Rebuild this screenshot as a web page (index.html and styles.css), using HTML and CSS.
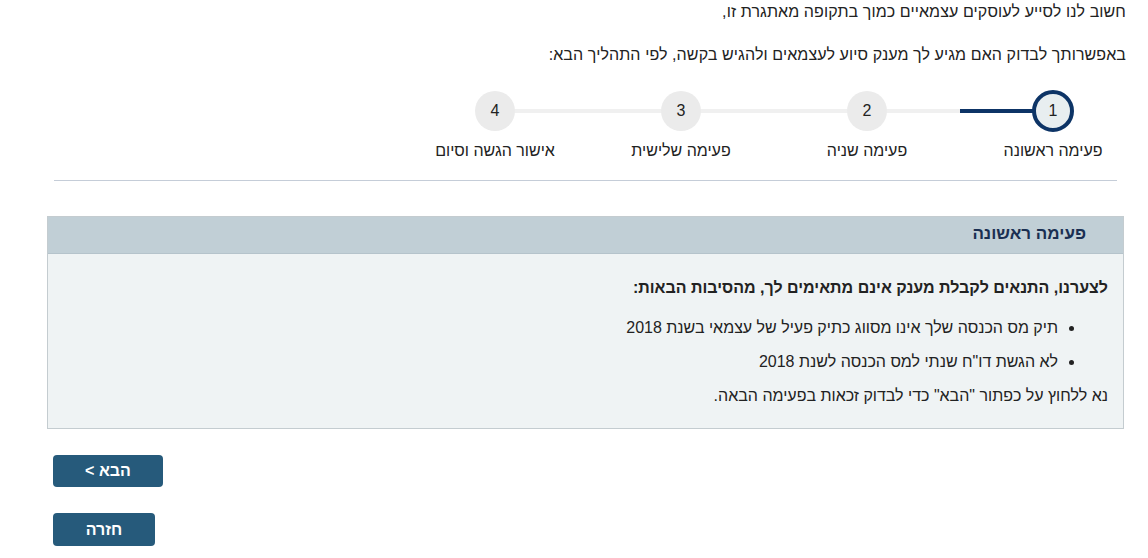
FILE: index.html
```html
<!DOCTYPE html>
<html lang="he" dir="rtl">
<head>
<meta charset="utf-8">
<link rel="stylesheet" href="styles.css">
</head>
<body>
<div class="page">
  <p class="intro intro-first">חשוב לנו לסייע לעוסקים עצמאיים כמוך בתקופה מאתגרת זו,</p>
  <p class="intro intro-second">באפשרותך לבדוק האם מגיע לך מענק סיוע לעצמאים ולהגיש בקשה, לפי התהליך הבא:</p>

  <ol class="stepper">
    <li class="step step-active"><span class="step-circle">1</span><span class="step-label">פעימה ראשונה</span></li>
    <li class="step"><span class="step-circle">2</span><span class="step-label">פעימה שניה</span></li>
    <li class="step"><span class="step-circle">3</span><span class="step-label">פעימה שלישית</span></li>
    <li class="step step-last"><span class="step-circle">4</span><span class="step-label">אישור הגשה וסיום</span></li>
  </ol>

  <hr class="divider">

  <section class="panel">
    <header class="panel-head">פעימה ראשונה</header>
    <div class="panel-body">
      <p class="panel-lead">לצערנו, התנאים לקבלת מענק אינם מתאימים לך, מהסיבות הבאות:</p>
      <ul class="reasons">
        <li>תיק מס הכנסה שלך אינו מסווג כתיק פעיל של עצמאי בשנת 2018</li>
        <li>לא הגשת דו"ח שנתי למס הכנסה לשנת 2018</li>
      </ul>
      <p class="panel-note">נא ללחוץ על כפתור "הבא" כדי לבדוק זכאות בפעימה הבאה.</p>
    </div>
  </section>

  <div class="actions">
    <button class="btn btn-next">הבא &gt;</button>
    <button class="btn btn-back">חזרה</button>
  </div>
</div>
</body>
</html>
```

FILE: styles.css
```css
* { box-sizing: border-box; }
html, body { margin: 0; padding: 0; background: #fff; }
body {
  font-family: "Liberation Sans", Arial, sans-serif;
  font-size: 16px;
  color: #222;
}
.page {
  width: 1148px;
  padding: 0 22px 0 0;
}
.intro { margin: 0; line-height: 20px; letter-spacing: 0.1px; }
.intro-first { padding-top: 2px; }
.intro-second { margin-top: 23px; }

.stepper {
  list-style: none;
  margin: 26px -20px 0 0;
  padding: 0;
  display: flex;
  direction: rtl;
}
.step {
  position: relative;
  width: 186px;
  display: flex;
  flex-direction: column;
  align-items: center;
}
.step::before {
  content: "";
  position: absolute;
  top: 18px;
  left: 0;
  right: 0;
  height: 4px;
  background: #f0f0f0;
}
.step:first-child::before { right: 50%; }
.step-last::before { left: 50%; }
.step-active::before { background: #0d3466; }
.step-circle {
  position: relative;
  width: 40px;
  height: 40px;
  border-radius: 50%;
  background: #ebebeb;
  display: flex;
  align-items: center;
  justify-content: center;
  font-size: 16px;
  color: #222;
}
.step-active .step-circle {
  background: #e8eef0;
  border: 4px solid #0d3466;
  width: 42px;
  height: 42px;
  margin-top: -1px;
  margin-bottom: -1px;
}
.step-label {
  margin-top: 11px;
  line-height: 18px;
  color: #222;
}

.divider {
  border: 0;
  border-top: 1px solid #c5cdd8;
  margin: 20px 9px 0 54px;
}

.panel {
  margin: 35px 2px 0 47px;
  border: 1px solid #c4ccd0;
  background: #eff3f4;
}
.panel-head {
  background: #c1cfd6;
  border-bottom: 1px solid #b5c3cb;
  height: 37px;
  line-height: 34px;
  padding-right: 37px;
  font-size: 17px;
  font-weight: bold;
  color: #1a2f52;
}
.panel-body {
  padding: 24px 15px 22px 15px;
}
.panel-lead { margin: 0; font-weight: bold; line-height: 20px; color: #222; }
.reasons {
  margin: 20px 0 0 0;
  padding: 0 50px 0 0;
  list-style: disc;
}
.reasons li { line-height: 20px; margin-bottom: 14px; }
.reasons li:last-child { margin-bottom: 0; }
.panel-note { margin: 14px 0 0 0; line-height: 20px; }

.actions {
  direction: ltr;
  display: flex;
  flex-direction: column;
  align-items: flex-start;
  padding-left: 53px;
  margin-top: 26px;
  gap: 26px;
}
.btn {
  font-family: "Liberation Sans", Arial, sans-serif;
  font-size: 16px;
  font-weight: bold;
  color: #fff;
  background: #265a7b;
  border: 0;
  border-radius: 4px;
  height: 32px;
  padding: 0;
  direction: rtl;
}
.btn-next { width: 110px; }
.btn-back { width: 102px; height: 33px; }
```
